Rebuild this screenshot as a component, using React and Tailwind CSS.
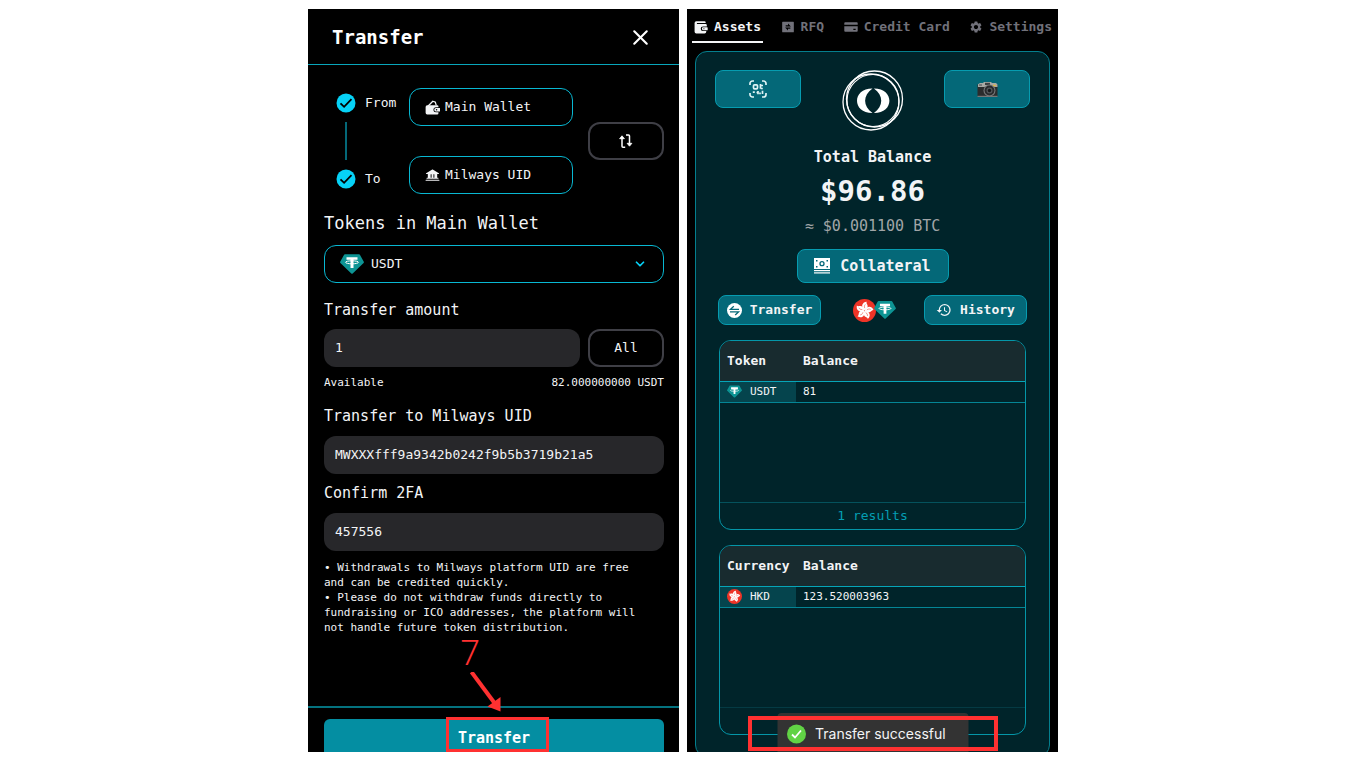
import React, { useState } from 'react';
import { MdHistory, MdSettings } from 'react-icons/md';
import { PiBankFill } from 'react-icons/pi';
import { RiExchangeBoxFill } from 'react-icons/ri';
import { ChevronDown, X } from 'lucide-react';

const WalletIcon = ({ size = 14 }) => (
  <svg width={size} height={size} viewBox="0 0 24 24" fill="currentColor" aria-hidden="true">
    <path d="M4 2h14a2 2 0 0 1 2 2v1H5v2h15a2 2 0 0 1 2 2v2h-6.500a4 4 0 0 0 0 8H21v1a3 3 0 0 1-3 3H4a3 3 0 0 1-3-3V5a3 3 0 0 1 3-3z" />
    <path d="M16 12.500h6.500a1 1 0 0 1 1 1v3a1 1 0 0 1-1 1H16a2.500 2.500 0 0 1 0-5z" />
    <circle cx="17" cy="15" r="1" fill="#000" />
  </svg>
);

const OpenWalletIcon = ({ size = 15 }) => (
  <svg width={size} height={size} viewBox="0 0 24 24" aria-hidden="true">
    <path d="M5 9.500L12.500 2l4 1.500 1.500 5" fill="none" stroke="currentColor" strokeWidth="2" strokeLinejoin="round" />
    <path d="M3.500 8.500h16a2 2 0 0 1 2 2v1h-4a4 4 0 0 0 0 8h4V21a2 2 0 0 1-2 2h-16A2.500 2.500 0 0 1 1 20.500V11a2.500 2.500 0 0 1 2.500-2.500z" fill="currentColor" />
    <path d="M17.500 12.800H24v5.400h-6.500a2.700 2.700 0 0 1 0-5.400z" fill="currentColor" />
    <circle cx="18.500" cy="15.500" r="1.200" fill="#000" />
  </svg>
);

const CardIcon = ({ size = 14 }) => (
  <svg width={size} height={size} viewBox="0 0 24 24" fill="currentColor" aria-hidden="true">
    <path d="M2 4h20a1.500 1.500 0 0 1 1.500 1.500V8H.5V5.500A1.500 1.500 0 0 1 2 4z" />
    <path d="M.5 10.500h23v8A1.500 1.500 0 0 1 22 20H2a1.500 1.500 0 0 1-1.500-1.500zM16 15v2h4v-2z" fillRule="evenodd" />
  </svg>
);

const CheckIcon = () => (
  <svg width="20" height="20" viewBox="0 0 20 20" aria-hidden="true">
    <circle cx="10" cy="10" r="9.500" fill="#06d2f7" />
    <path d="M4.500 10.300l3.600 3.500 7.400-7.600" fill="none" stroke="#000" strokeWidth="1.800" />
  </svg>
);

const SwapIcon = () => (
  <svg width="14" height="14" viewBox="0 0 14 14" fill="none" stroke="#fff" strokeWidth="1.500" aria-hidden="true">
    <path d="M3 4v8.200a1 1 0 0 0 1 1h2.200M7 .9h2.500a1 1 0 0 1 1 1V10" />
    <path d="M3 1.800l2.400 2.900H.6zM10.500 12.200L8.100 9.300h4.800z" fill="#fff" strokeWidth=".8" strokeLinejoin="round" />
  </svg>
);

const TetherIcon = ({ size }) => (
  <svg width={size} height={size} viewBox="0 0 24 24" className="shrink-0" aria-hidden="true">
    <path d="M5 2.200h14a1 1 0 0 1 .9.500l3.900 7a1 1 0 0 1-.2 1.200l-10.900 10.500a1 1 0 0 1-1.400 0L.4 10.900a1 1 0 0 1-.2-1.200l3.900-7a1 1 0 0 1 .9-.5z" fill="#0d9494" />
    <path d="M6.500 5.200h11v2.600h-4v8.200h-3V7.800h-4z" fill="#fff" />
    <ellipse cx="12" cy="10.300" rx="6.500" ry="1.500" fill="none" stroke="#fff" strokeWidth="1" />
  </svg>
);

const HkdIcon = ({ size }) => (
  <svg width={size} height={size} viewBox="0 0 24 24" className="shrink-0" aria-hidden="true">
    <circle cx="12" cy="12" r="12" fill="#ee3427" />
    {[10, 82, 154, 226, 298].map((angle) => (
      <g key={angle} transform={`rotate(${angle} 12 12)`}>
        <path d="M12 11.800C7.600 9.500 7.400 4 12.800 2.600c-1 2 2.600 3 1.600 6-.5 1.400-1.400 2.400-2.400 3.200z" fill="#fff" />
        <path d="M11.800 9.500c-1-1.500-.8-3 0-4" fill="none" stroke="#ee3427" strokeWidth=".5" />
      </g>
    ))}
  </svg>
);

const QrIcon = () => (
  <svg width="18" height="18" viewBox="0 0 18 18" fill="none" stroke="#dff3f5" strokeWidth="1.700" aria-hidden="true">
    <path d="M1 5V3.500A2.500 2.500 0 0 1 3.500 1H5M13 1h1.500A2.500 2.500 0 0 1 17 3.500V5M17 13v1.500a2.500 2.500 0 0 1-2.500 2.500H13M5 17H3.500A2.500 2.500 0 0 1 1 14.500V13" />
    <rect x="4.500" y="4.800" width="4" height="4" rx="1" />
    <path d="M11.500 4v4.800M11.500 5.500H14M13.800 8.500h-2M3.800 12.200h2M7.500 12.500h1.800M9 11v3.300M11 12.500v1.800M13.500 10.800v3.200" />
  </svg>
);

const CameraIcon = () => (
  <svg width="21" height="17" viewBox="0 0 21 17" aria-hidden="true">
    <rect x=".5" y="3" width="20" height="13" rx="1.200" fill="#2b2c2d" />
    <path d="M1 5V3.200L3 2h3l1-1h7l1 1h4l1.500 1.500V6H1z" fill="#a8a9a4" />
    <rect x="8" y="1.800" width="5" height="2.200" fill="#3d4042" />
    <rect x="16" y="3.800" width="2.600" height="1.600" fill="#e5b93a" />
    <rect x="2" y="3.300" width="3" height="1.500" fill="#66696b" />
    <circle cx="12.500" cy="9.500" r="6" fill="#77797a" />
    <circle cx="12.500" cy="9.500" r="4.900" fill="#292b2d" />
    <circle cx="12.500" cy="9.500" r="3" fill="#53575b" />
    <circle cx="12.500" cy="9.500" r="1.700" fill="#17191b" />
    <rect x=".5" y="14.800" width="20" height="1.200" fill="#777" />
  </svg>
);

const CollateralIcon = () => (
  <svg width="16" height="16" viewBox="0 0 16 16" fill="#fff" aria-hidden="true">
    <rect width="16" height="11" />
    <rect y="12" width="16" height="1.200" />
    <rect y="14.300" width="16" height="1.200" />
    <circle cx="8" cy="5.700" r="2" fill="none" stroke="#046878" strokeWidth="1.300" />
    <path d="M2 2h1.500v1.500H2zM12.500 2H14v1.500h-1.500zM2 8h1.500v1.500H2zM12.500 8H14v1.500h-1.500z" fill="#046878" />
  </svg>
);

const TransferIcon = () => (
  <svg width="15" height="15" viewBox="0 0 15 15" aria-hidden="true">
    <circle cx="7.500" cy="7.500" r="7.500" fill="#fff" />
    <path d="M12 6.300H3.500L6.800 3.300M3 8.900h8.500L8.200 11.900" fill="none" stroke="#046878" strokeWidth="1.300" />
  </svg>
);

const BrandLogo = () => (
  <svg width="62" height="61" viewBox="0 0 62 61" fill="none" stroke="#fff" aria-label="Milways">
    <circle cx="32.500" cy="29" r="28" strokeWidth="1.300" />
    <circle cx="29" cy="32" r="28" strokeWidth="1.300" />
    <circle cx="31" cy="30.500" r="26" strokeWidth="1.100" />
    <path d="M30.500 18.500C20 18.500 15 24.500 15 30.800s5 12.300 15.500 12.300c-9.800-7-9.800-17.600 0-24.600z" fill="#fff" stroke="none" />
    <path d="M31.900 18.500c10.500 0 15.500 6 15.500 12.300s-5 12.300-15.500 12.300c9.800-7 9.800-17.600 0-24.600z" fill="#fff" stroke="none" />
  </svg>
);

const tabs = [
  { name: 'Assets', icon: <WalletIcon />, active: true },
  { name: 'RFQ', icon: <RiExchangeBoxFill size={14} /> },
  { name: 'Credit Card', icon: <CardIcon /> },
  { name: 'Settings', icon: <MdSettings size={14} /> },
];

const notes = [
  'Withdrawals to Milways platform UID are free and can be credited quickly.',
  'Please do not withdraw funds directly to fundraising or ICO addresses, the platform will not handle future token distribution.',
];

const fieldClass = 'h-[38px] w-full min-w-0 rounded-xl bg-[#27272a] px-[11px] pb-0.5 text-[13px] text-gray-100 outline-none';
const walletButton = 'flex h-[38px] items-center gap-[5px] rounded-xl border border-[#08b8d2] pl-[15px] text-[13px]';
const tealButton = 'flex items-center justify-center rounded-lg border border-[#069cb0] bg-[#046878] font-bold text-gray-100';

const Step = ({ label }) => (
  <div className="flex h-5 items-center gap-[9px] text-[13px]">
    <CheckIcon />
    {label}
  </div>
);

const TransferPanel = () => {
  const [amount, setAmount] = useState('1');
  const [uid, setUid] = useState('MWXXXfff9a9342b0242f9b5b3719b21a5');
  const [code, setCode] = useState('457556');

  return (
    <section className="relative flex min-w-0 flex-col overflow-hidden bg-black text-gray-100">
      <header className="flex h-14 shrink-0 items-center justify-between border-b border-[#08a6bb] pt-0.5 pr-[26px] pl-6">
        <h1 className="text-[19px] font-bold text-white">Transfer</h1>
        <button aria-label="Close" className="text-white"><X size={25} strokeWidth={2} /></button>
      </header>

      <div className="flex flex-1 flex-col pr-[15px] pl-4">
        <div className="mt-[23px] flex items-start">
          <div className="w-[85px] shrink-0 pt-[5px] pl-3">
            <Step label="From" />
            <div className="my-[9px] ml-[9px] h-[38px] w-0.5 bg-[#046878]" />
            <Step label="To" />
          </div>
          <div className="flex min-w-0 flex-1 flex-col gap-[30px]">
            <button className={walletButton}><OpenWalletIcon /> Main Wallet</button>
            <button className={walletButton}><PiBankFill size={15} /> Milways UID</button>
          </div>
          <button aria-label="Swap" className="mt-[34px] ml-[15px] flex h-[38px] w-[76px] items-center justify-center rounded-xl border-2 border-[#3f3f46]">
            <SwapIcon />
          </button>
        </div>

        <label htmlFor="token" className="mt-[17px] text-[17px] leading-6">Tokens in Main Wallet</label>
        <div className="mt-[10px] flex h-[38px] items-center rounded-xl border border-[#08b8d2] pr-4 pl-[15px]">
          <TetherIcon size={24} />
          <select id="token" className="ml-[7px] flex-1 appearance-none bg-transparent text-[13px] outline-none">
            <option>USDT</option>
          </select>
          <ChevronDown size={14} strokeWidth={3} className="text-[#06d2f7]" />
        </div>

        <label htmlFor="amount" className="mt-4 text-[15px] leading-[22px]">Transfer amount</label>
        <div className="mt-2 flex gap-2">
          <input id="amount" className={fieldClass} value={amount} onChange={(e) => setAmount(e.target.value)} />
          <button onClick={() => setAmount('82')} className="h-[38px] w-[76px] shrink-0 rounded-xl border-2 border-[#3f3f46] text-[13px]">All</button>
        </div>
        <div className="mt-2 flex justify-between text-[11px] leading-[15px]">
          <span>Available</span>
          <span>82.000000000 USDT</span>
        </div>

        <label htmlFor="uid" className="mt-[15px] text-[15px] leading-[22px]">Transfer to Milways UID</label>
        <input id="uid" className={`${fieldClass} mt-[9px]`} value={uid} onChange={(e) => setUid(e.target.value)} />

        <label htmlFor="code" className="mt-2 text-[15px] leading-[22px]">Confirm 2FA</label>
        <input id="code" className={`${fieldClass} mt-[9px]`} value={code} onChange={(e) => setCode(e.target.value)} />

        <ul className="mt-[9px] pr-4 text-[11px] leading-[15px]">
          {notes.map((note) => (
            <li key={note}>{`• ${note}`}</li>
          ))}
        </ul>
      </div>

      <footer className="h-[46px] shrink-0 border-t-2 border-[#04727f] pt-[11px] pr-[15px] pl-4">
        <button className="h-[38px] w-full rounded-md bg-[#048ea2] text-[15px] font-bold text-white">Transfer</button>
      </footer>

      {/* Step marker pointing at the submit button */}
      <div className="absolute bottom-0 left-1/2 h-[35px] w-[103px] -translate-x-12 border-[3px] border-[#ff3131]" />
      <div className="absolute bottom-[36px] left-1/2 w-12 -translate-x-[33px] text-[#ff3131]">
        <div className="font-['Roboto',sans-serif] text-[35px] leading-[36px] font-light">7</div>
        <svg width="36" height="44" viewBox="0 0 36 44" className="ml-1.5" aria-hidden="true">
          <path d="M4.500 0l23 31" stroke="currentColor" strokeWidth="4" />
          <path d="M33.500 39.500L20.500 34.500l13-9.500z" fill="currentColor" />
        </svg>
      </div>
    </section>
  );
};

const BalanceTable = ({ heading, icon, symbol, balance, footer, footerBorder }) => (
  <div className="mx-[23px] mt-[15px] flex h-[190px] flex-col overflow-hidden rounded-xl border border-[#0496a8]">
    <table className="w-full table-fixed text-left">
      <thead className="bg-[#182b2f]">
        <tr className="h-10 border-b border-[#06a5b8] text-[13px] text-gray-100">
          <th className="w-[76px] pl-[7px] font-bold">{heading}</th>
          <th className="pl-[7px] font-bold">Balance</th>
        </tr>
      </thead>
      <tbody>
        <tr className="h-[21px] border-b border-[#048595] text-[11px] leading-[15px] text-gray-100">
          <td className="bg-[#05444d] pl-[7px]">
            <span className="flex items-center gap-2">{icon}{symbol}</span>
          </td>
          <td className="pl-[7px]">{balance}</td>
        </tr>
      </tbody>
    </table>
    <div className={`mt-auto h-[27px] border-t text-center text-[13px] leading-[25px] text-[#049eb2] ${footerBorder}`}>{footer}</div>
  </div>
);

const AssetsPanel = () => (
  <section className="relative flex min-w-0 flex-col overflow-hidden bg-black">
    <nav className="flex h-[34px] shrink-0 justify-between pr-1 pl-[5px]">
      {tabs.map((tab) => (
        <a
          key={tab.name}
          href="#"
          className={`flex items-center gap-[6px] border-b-2 px-0.5 pt-1 text-[13px] font-bold whitespace-nowrap ${tab.active ? 'border-gray-100 text-gray-100' : 'border-transparent text-[#71717a]'}`}
        >
          {tab.icon}
          {tab.name}
        </a>
      ))}
    </nav>

    <div className="mx-2 mt-2 h-[706px] shrink-0 rounded-xl border border-[#047f8e] bg-[#00242a]">
      <div className="mt-[18px] flex items-start justify-between px-[19px]">
        <button aria-label="Show QR code" className={`${tealButton} h-[38px] w-[86px]`}><QrIcon /></button>
        <BrandLogo />
        <button aria-label="Open camera" className={`${tealButton} h-[38px] w-[86px]`}><CameraIcon /></button>
      </div>

      <div className="mt-[15px] flex flex-col items-center text-gray-100">
        <h2 className="text-[15px] leading-[22px] font-bold">Total Balance</h2>
        <p className="mt-[5px] text-[29px] leading-9 font-bold">$96.86</p>
        <p className="mt-[6px] text-[15px] leading-[22px] text-[#a1a5a7]">≈ $0.001100 BTC</p>
        <button className={`${tealButton} mt-3 h-[34px] w-[152px] gap-[10px] text-[15px]`}>
          <CollateralIcon /> Collateral
        </button>
      </div>

      <div className="mt-3 flex items-center justify-between px-[22px]">
        <button className={`${tealButton} h-[30px] w-[103px] gap-2 text-[13px]`}>
          <TransferIcon /> Transfer
        </button>
        <div className="flex items-center pl-1">
          <HkdIcon size={23} />
          <div className="-ml-0.5"><TetherIcon size={22} /></div>
        </div>
        <button className={`${tealButton} h-[30px] w-[103px] gap-2 text-[13px]`}>
          <MdHistory size={16} /> History
        </button>
      </div>

      <BalanceTable
        heading="Token"
        icon={<TetherIcon size={15} />}
        symbol="USDT"
        balance="81"
        footer="1 results"
        footerBorder="border-[#04525c]"
      />
      <BalanceTable
        heading="Currency"
        icon={<HkdIcon size={15} />}
        symbol="HKD"
        balance="123.520003963"
        footerBorder="border-[#043a43]"
      />
    </div>

    {/* Toast */}
    <div role="status" className="absolute bottom-0 left-1/2 flex h-[39px] w-[191px] -translate-x-1/2 items-center gap-[9px] rounded-t bg-[#333333] pt-0.5 pl-[9px] font-['Inter',sans-serif] text-[14px] text-gray-100">
      <svg width="20" height="20" viewBox="0 0 20 20" aria-hidden="true">
        <circle cx="10" cy="10" r="9.500" fill="#61d345" />
        <path d="M5.500 10.500l3 3 6-7" fill="none" stroke="#fff" strokeWidth="1.800" />
      </svg>
      Transfer successful
    </div>
    <div className="absolute bottom-px left-1/2 h-[35px] w-[250px] -translate-x-1/2 border-4 border-[#ff3131]" />
  </section>
);

export default function App() {
  return (
    <div className="h-screen bg-white px-4 pt-[9px] pb-4 font-['DejaVu_Sans_Mono',monospace]">
      <main className="mx-auto grid h-full max-w-[750px] grid-cols-2 gap-2">
        <TransferPanel />
        <AssetsPanel />
      </main>
    </div>
  );
}
